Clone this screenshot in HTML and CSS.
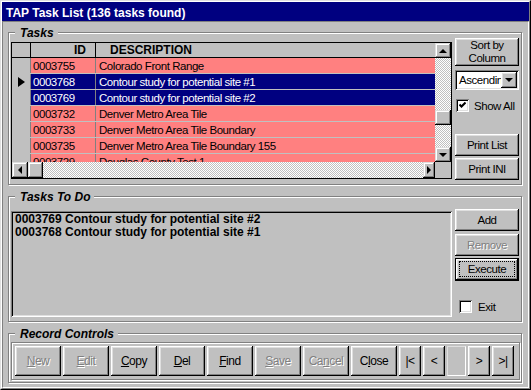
FILE: index.html
```html
<!DOCTYPE html>
<html lang="en">
<head>
    <meta charset="UTF-8">
    <title>TAP Task List</title>
    <link rel="stylesheet" href="styles.css">
</head>
<body>
    <div class="window">
        <div class="frame">
            <div class="titlebar">TAP Task List (136 tasks found)</div>
            <div class="client">

                <div class="group tasks">
                    <span class="group-label">Tasks</span>
                    <div class="grid">
                        <div class="grid-body">
                            <div class="row head">
                                <div class="sel"></div>
                                <div class="c-id">ID</div>
                                <div class="c-desc">DESCRIPTION</div>
                            </div>
                            <div class="row pink">
                                <div class="sel"></div>
                                <div class="c-id">0003755</div>
                                <div class="c-desc">Colorado Front Range</div>
                            </div>
                            <div class="row picked">
                                <div class="sel"><span class="pointer"></span></div>
                                <div class="c-id">0003768</div>
                                <div class="c-desc">Contour study for potential site #1</div>
                            </div>
                            <div class="row picked">
                                <div class="sel"></div>
                                <div class="c-id">0003769</div>
                                <div class="c-desc">Contour study for potential site #2</div>
                            </div>
                            <div class="row pink">
                                <div class="sel"></div>
                                <div class="c-id">0003732</div>
                                <div class="c-desc">Denver Metro Area Tile</div>
                            </div>
                            <div class="row pink">
                                <div class="sel"></div>
                                <div class="c-id">0003733</div>
                                <div class="c-desc">Denver Metro Area Tile Boundary</div>
                            </div>
                            <div class="row pink">
                                <div class="sel"></div>
                                <div class="c-id">0003735</div>
                                <div class="c-desc">Denver Metro Area Tile Boundary 155</div>
                            </div>
                            <div class="row pink">
                                <div class="sel"></div>
                                <div class="c-id">0003729</div>
                                <div class="c-desc">Douglas County Test 1</div>
                            </div>
                        </div>
                        <div class="vscroll">
                            <div class="sb-btn v"><span class="arrow up"></span></div>
                            <div class="sb-btn thumb-v"></div>
                            <div class="sb-btn v down-btn"><span class="arrow down"></span></div>
                        </div>
                        <div class="hscroll">
                            <div class="sb-btn h"><span class="arrow left"></span></div>
                            <div class="sb-btn thumb-h"></div>
                            <div class="sb-btn h right-btn"><span class="arrow right"></span></div>
                        </div>
                        <div class="corner"></div>
                    </div>
                    <div class="side">
                        <div class="btn sort">Sort by<br>Column</div>
                        <div class="combo">
                            <span class="combo-text">Ascending</span>
                            <div class="btn combo-btn"><span class="arrow down"></span></div>
                        </div>
                        <div class="check-row show-all">
                            <span class="check">
                                <svg width="7" height="7" viewBox="0 0 7 7"><polyline points="0.5,2.5 2.5,4.5 6.5,0.5" fill="none" stroke="#000" stroke-width="2"/></svg>
                            </span>
                            <span>Show All</span>
                        </div>
                        <div class="btn print-list">Print List</div>
                        <div class="btn print-ini">Print INI</div>
                    </div>
                </div>

                <div class="group todo">
                    <span class="group-label">Tasks To Do</span>
                    <div class="todo-list">
                        <div>0003769 Contour study for potential site #2</div>
                        <div>0003768 Contour study for potential site #1</div>
                    </div>
                    <div class="side todo-side">
                        <div class="btn">Add</div>
                        <div class="btn disabled remove">Remove</div>
                        <div class="btn default"><span class="focus">Execute</span></div>
                        <div class="check-row exit">
                            <span class="check"></span>
                            <span>Exit</span>
                        </div>
                    </div>
                </div>

                <div class="group records">
                    <span class="group-label">Record Controls</span>
                    <div class="rec-panel">
                        <div class="btn rec disabled"><span><u>N</u>ew</span></div>
                        <div class="btn rec disabled"><span><u>E</u>dit</span></div>
                        <div class="btn rec"><span><u>C</u>opy</span></div>
                        <div class="btn rec"><span><u>D</u>el</span></div>
                        <div class="btn rec"><span><u>F</u>ind</span></div>
                        <div class="btn rec disabled"><span><u>S</u>ave</span></div>
                        <div class="btn rec disabled"><span>Ca<u>n</u>cel</span></div>
                        <div class="btn rec"><span>C<u>l</u>ose</span></div>
                        <div class="btn nav">|&lt;</div>
                        <div class="btn nav">&lt;</div>
                        <div class="rec-pos"></div>
                        <div class="btn nav">&gt;</div>
                        <div class="btn nav">&gt;|</div>
                    </div>
                </div>

            </div>
        </div>
    </div>
</body>
</html>
```

FILE: styles.css
```css
* {
    box-sizing: border-box;
}

body {
    margin: 0;
    background-color: #c0c0c0;
    font-family: "Liberation Sans", Arial, sans-serif;
    font-size: 11.5px;
    letter-spacing: -0.45px;
    color: #000;
}

.window {
    width: 531px;
    height: 390px;
    border: 1px solid;
    border-color: #dfdfdf #000 #000 #dfdfdf;
}

.frame {
    height: 100%;
    display: flex;
    flex-direction: column;
    border: 1px solid;
    border-color: #fff #808080 #808080 #fff;
}

.titlebar {
    flex: none;
    height: 19px;
    padding: 2px 0 0 4px;
    background-color: #000080;
    color: #fff;
    font-size: 12px;
    font-weight: bold;
    letter-spacing: 0;
    line-height: 18px;
    white-space: nowrap;
}

.client {
    flex: 1;
    padding: 10px 6px 0 5px;
    border: 1px solid;
    border-color: #808080 #fff #fff #808080;
}

/* etched group frame */
.group {
    position: relative;
    border: 1px solid #808080;
    box-shadow: inset 1px 1px 0 #fff, 1px 1px 0 #fff;
}

.group + .group {
    margin-top: 11px;
}

.group-label {
    position: absolute;
    top: -7px;
    left: 6px;
    padding: 0 4px 0 5px;
    background-color: #c0c0c0;
    font-size: 12px;
    font-weight: bold;
    font-style: italic;
    letter-spacing: 0;
    line-height: 14px;
    white-space: nowrap;
}

/* buttons */
.btn {
    display: flex;
    align-items: center;
    justify-content: center;
    text-align: center;
    background-color: #c0c0c0;
    box-shadow: inset -1px -1px 0 #000, inset 1px 1px 0 #fff, inset -2px -2px 0 #808080, inset 2px 2px 0 #dfdfdf;
    white-space: nowrap;
}

.btn.disabled {
    color: #808080;
    text-shadow: 1px 1px 0 #fff;
}

.btn.default {
    box-shadow: inset 0 0 0 1px #000, inset -2px -2px 0 #000, inset 2px 2px 0 #fff, inset -3px -3px 0 #808080, inset 3px 3px 0 #dfdfdf;
}

.focus {
    align-self: stretch;
    flex: 1;
    display: flex;
    align-items: center;
    justify-content: center;
    margin: 3px 4px 4px 4px;
    border: 1px dotted #000;
}

/* tasks grid */
.tasks {
    height: 153px;
    display: flex;
    gap: 3px;
    padding: 5px 2px 0 2px;
}

.grid {
    flex: none;
    width: 441px;
    height: 137px;
    margin-top: 4px;
    border: 1px solid #000;
    display: grid;
    grid-template-columns: 423px 16px;
    grid-template-rows: 119px 16px;
}

.grid-body {
    overflow: hidden;
    background-color: #c0c0c0;
}

.row {
    display: flex;
    height: 16px;
    line-height: 16px;
    border-bottom: 1px solid #c0c0c0;
    white-space: nowrap;
}

.row > div {
    overflow: hidden;
}

.sel {
    flex: none;
    width: 19px;
    display: flex;
    align-items: center;
    padding-left: 6px;
    background-color: #c0c0c0;
    border-right: 1px solid #808080;
}

.c-id {
    flex: none;
    width: 65px;
    padding-left: 2px;
    border-right: 1px solid #808080;
}

.c-desc {
    flex: 1;
    padding-left: 3px;
}

.row.head {
    height: 15px;
    line-height: 14px;
    border-bottom-color: #000;
    font-size: 12px;
    font-weight: bold;
    letter-spacing: 0;
}

.head .sel,
.head .c-id {
    border-right-color: #000;
}

.head .c-id {
    text-align: right;
    padding-right: 9px;
}

.head .c-desc {
    padding-left: 14px;
}

.pink .c-id,
.pink .c-desc {
    background-color: #ff8080;
}

.picked .c-id,
.picked .c-desc {
    background-color: #000080;
    color: #fff;
}

.pointer {
    width: 0;
    height: 0;
    border-left: 7px solid #000;
    border-top: 5px solid transparent;
    border-bottom: 5px solid transparent;
}

/* scroll bars */
.vscroll,
.hscroll {
    display: flex;
    background: repeating-conic-gradient(#fff 0 25%, #c0c0c0 0 50%) 0 0 / 2px 2px;
}

.vscroll {
    flex-direction: column;
}

.sb-btn {
    flex: none;
    display: flex;
    align-items: center;
    justify-content: center;
    background-color: #c0c0c0;
    box-shadow: inset -1px -1px 0 #000, inset 1px 1px 0 #dfdfdf, inset -2px -2px 0 #808080, inset 2px 2px 0 #fff;
}

.sb-btn.v {
    height: 15px;
}

.thumb-v {
    height: 15px;
    margin-top: 52px;
}

.down-btn {
    margin-top: auto;
}

.sb-btn.h {
    width: 16px;
}

.thumb-h {
    width: 15px;
}

.right-btn {
    width: 12px !important;
    margin-left: auto;
}

.corner {
    background-color: #c0c0c0;
}

.arrow {
    width: 0;
    height: 0;
}

.arrow.up {
    border-left: 4px solid transparent;
    border-right: 4px solid transparent;
    border-bottom: 4px solid #000;
}

.arrow.down {
    border-left: 4px solid transparent;
    border-right: 4px solid transparent;
    border-top: 4px solid #000;
}

.arrow.left {
    border-top: 4px solid transparent;
    border-bottom: 4px solid transparent;
    border-right: 4px solid #000;
}

.arrow.right {
    border-top: 4px solid transparent;
    border-bottom: 4px solid transparent;
    border-left: 4px solid #000;
}

/* right side column */
.side {
    flex: none;
    width: 64px;
    height: 142px;
    display: flex;
    flex-direction: column;
}

.sort {
    height: 28px;
    line-height: 13px;
}

.combo {
    height: 20px;
    margin-top: 4px;
    display: flex;
    padding: 2px;
    background-color: #fff;
    box-shadow: inset 1px 1px 0 #808080, inset -1px -1px 0 #fff, inset 2px 2px 0 #000, inset -2px -2px 0 #dfdfdf;
}

.combo-text {
    flex: 1;
    overflow: hidden;
    padding-left: 2px;
    line-height: 16px;
    white-space: nowrap;
}

.combo-btn {
    flex: none;
    width: 16px;
    height: 16px;
}

.check-row {
    display: flex;
    align-items: center;
    gap: 5px;
}

.show-all {
    margin-top: 9px;
    padding-left: 1px;
}

.check {
    flex: none;
    width: 13px;
    height: 13px;
    display: flex;
    align-items: center;
    justify-content: center;
    background-color: #fff;
    box-shadow: inset 1px 1px 0 #808080, inset -1px -1px 0 #fff, inset 2px 2px 0 #000, inset -2px -2px 0 #dfdfdf;
}

.print-list {
    height: 22px;
    margin-top: auto;
}

.print-ini {
    height: 22px;
    margin-top: 2px;
}

/* tasks to do */
.todo {
    height: 126px;
    display: flex;
    gap: 3px;
    padding: 12px 2px 0 2px;
}

.todo-list {
    flex: none;
    width: 441px;
    height: 106px;
    margin-top: 2px;
    padding: 2px 4px;
    background-color: #c0c0c0;
    box-shadow: inset 1px 1px 0 #808080, inset -1px -1px 0 #fff, inset 2px 2px 0 #000, inset -2px -2px 0 #dfdfdf;
    font-size: 12px;
    font-weight: bold;
    letter-spacing: 0;
    line-height: 13px;
    white-space: nowrap;
}

.todo-side {
    height: auto;
}

.todo-side .btn {
    height: 22px;
}

.todo-side .remove {
    margin-top: 3px;
}

.todo-side .default {
    height: 23px;
    margin-top: 2px;
}

.exit {
    margin-top: 19px;
    padding-left: 4px;
    gap: 6px;
}

/* record controls */
.records {
    height: 50px;
    padding: 8px 1px 0 2px;
}

.rec-panel {
    height: 38px;
    display: flex;
    gap: 2px;
    padding: 3px;
    border: 1px solid #808080;
    box-shadow: inset 1px 1px 0 #fff, 1px 1px 0 #fff;
}

.btn.rec {
    width: 46px;
    height: 30px;
    font-size: 12px;
}

.btn.nav {
    width: 22px;
    height: 30px;
    font-size: 12px;
}

.rec-pos {
    width: 19px;
    height: 30px;
    border: 1px solid;
    border-color: #dfdfdf #fff #fff #dfdfdf;
}
```
